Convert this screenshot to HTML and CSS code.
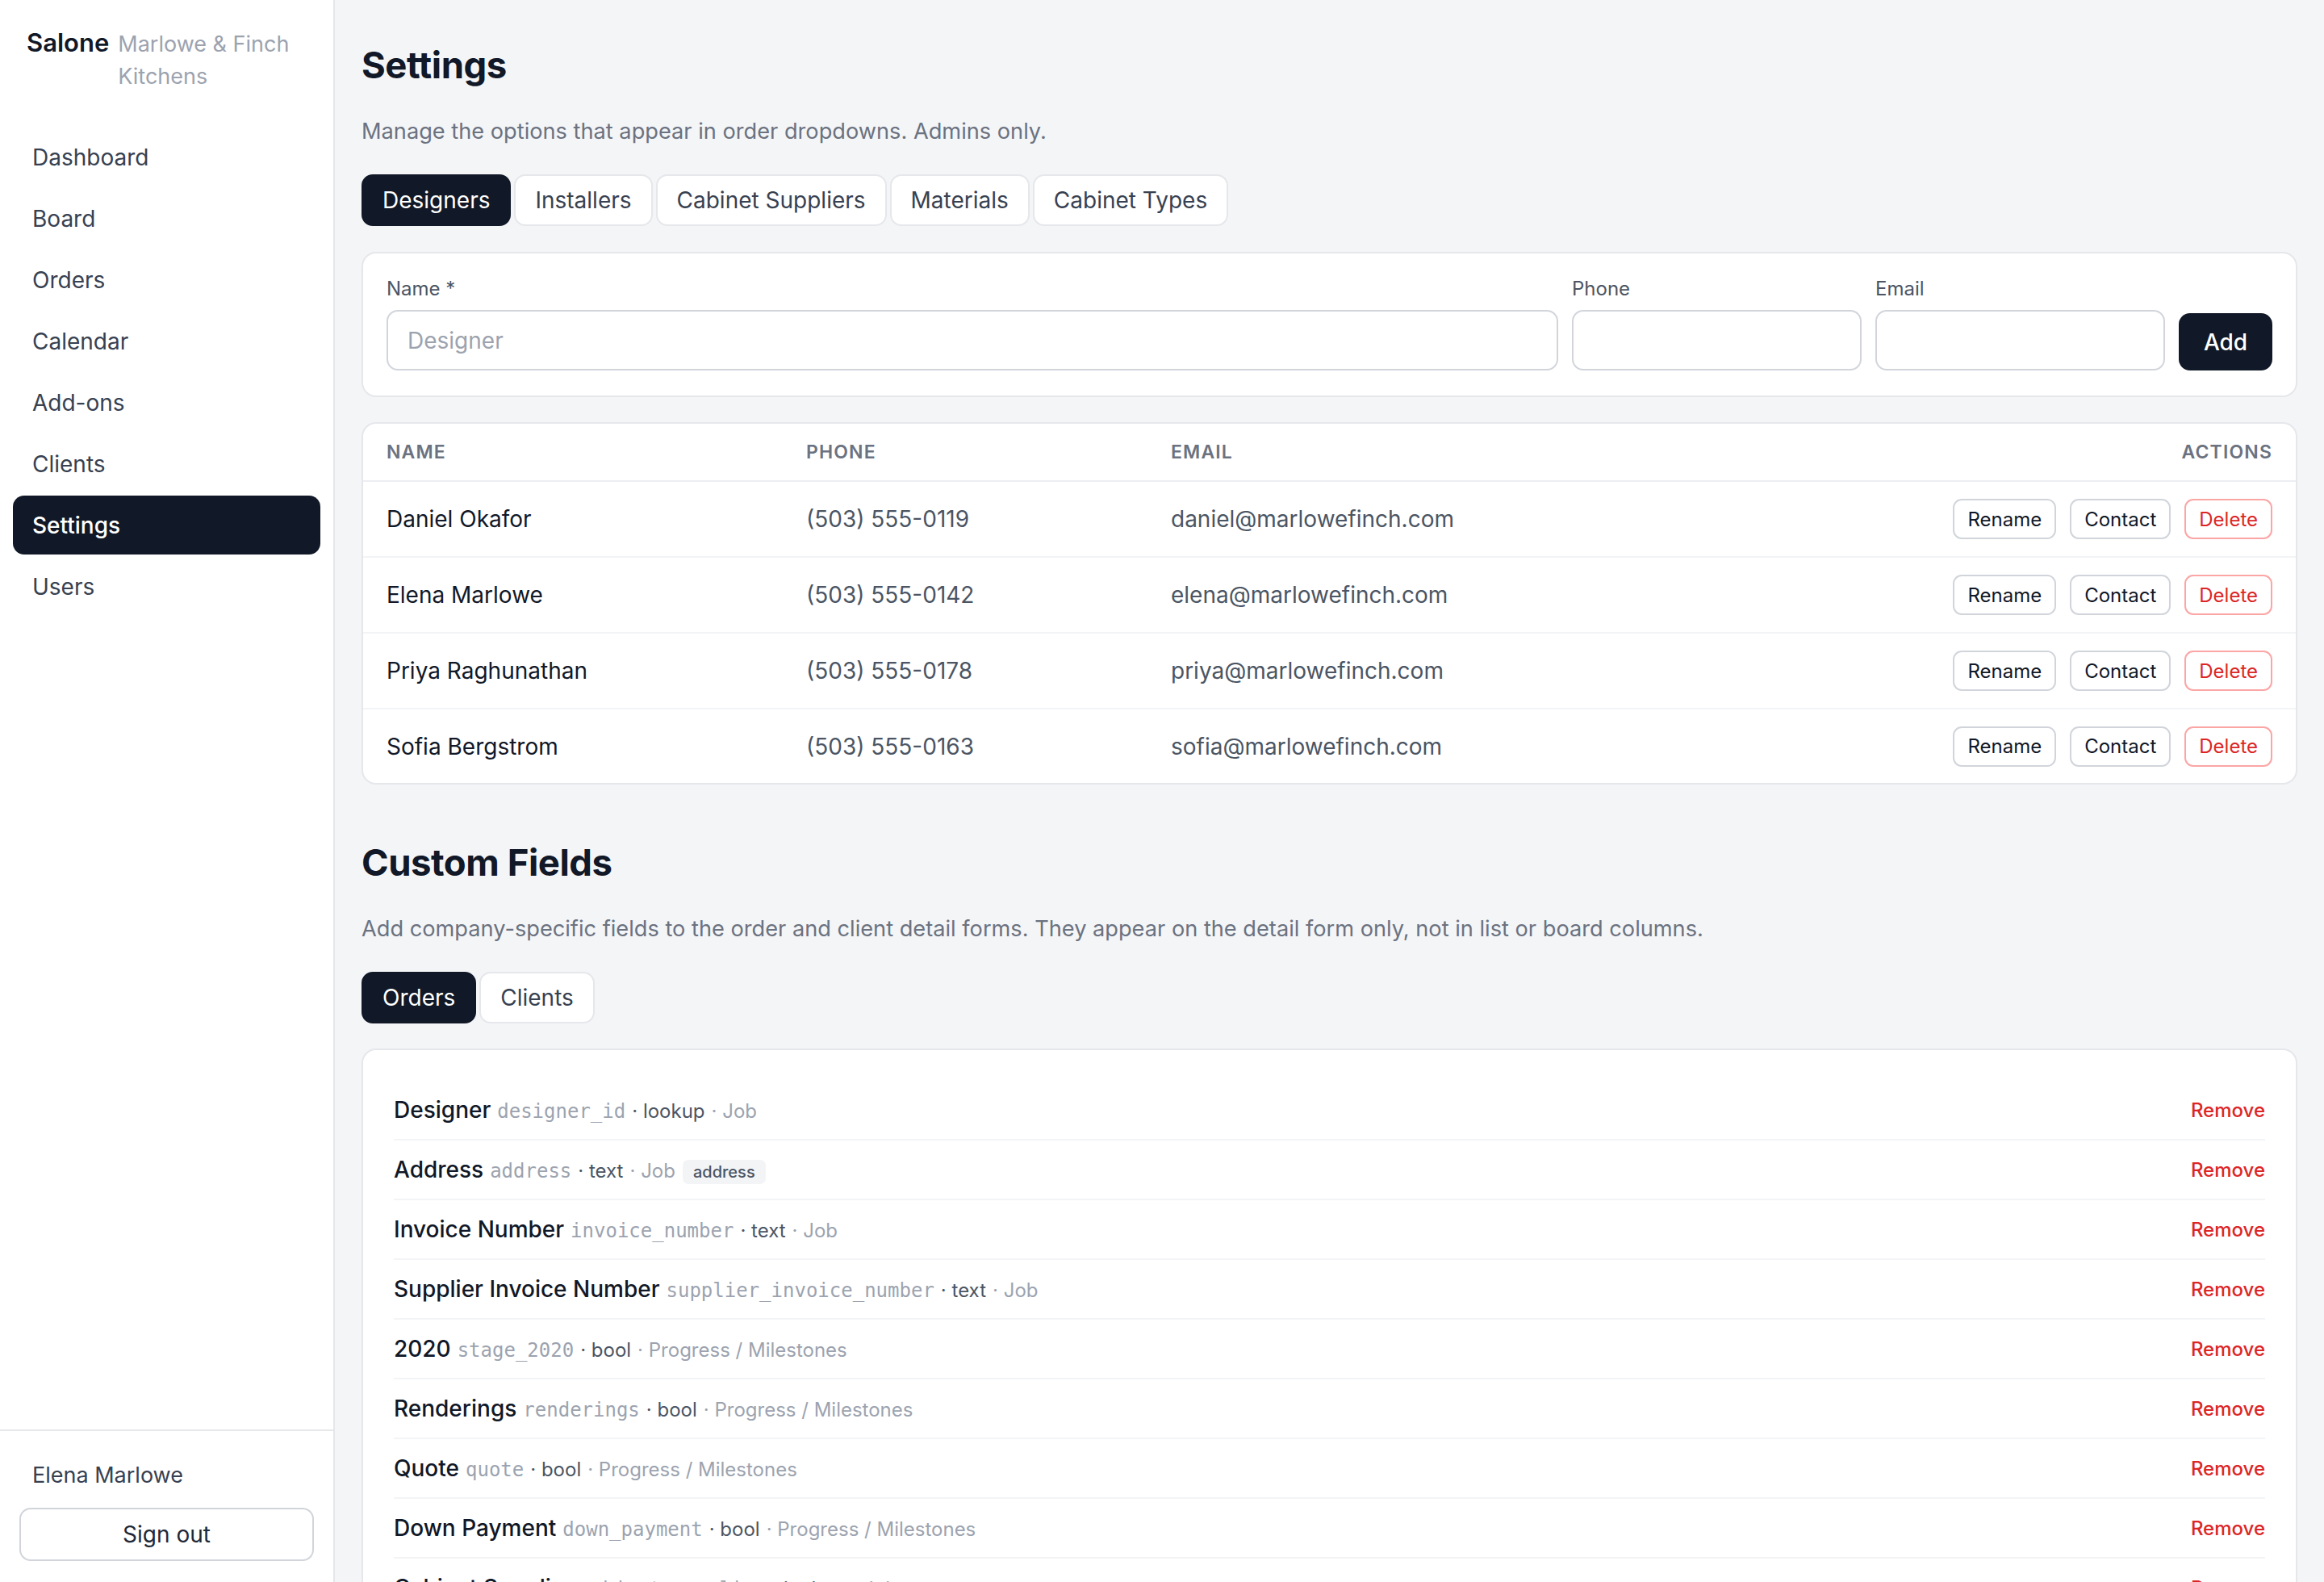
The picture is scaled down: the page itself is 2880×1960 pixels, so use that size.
FILE: index.html
```html
<!DOCTYPE html>
<html lang="en">
<head>
    <meta charset="UTF-8">
    <meta name="viewport" content="width=device-width, initial-scale=1.0">
    <title>Salone - Settings</title>
    <link rel="stylesheet" href="styles.css">
</head>
<body>
    <aside class="sidebar">
        <div class="brand">
            <span class="brand-name">Salone</span>
            <span class="brand-company">Marlowe &amp; Finch Kitchens</span>
        </div>

        <nav class="nav">
            <a href="#">Dashboard</a>
            <a href="#">Board</a>
            <a href="#">Orders</a>
            <a href="#">Calendar</a>
            <a href="#">Add-ons</a>
            <a href="#">Clients</a>
            <a href="#" class="active">Settings</a>
            <a href="#">Users</a>
        </nav>

        <div class="sidebar-footer">
            <div class="user-name">Elena Marlowe</div>
            <button class="sign-out">Sign out</button>
        </div>
    </aside>

    <main class="main">
        <h1>Settings</h1>
        <p class="desc">Manage the options that appear in order dropdowns. Admins only.</p>

        <div class="tabs">
            <button class="tab active">Designers</button>
            <button class="tab">Installers</button>
            <button class="tab">Cabinet Suppliers</button>
            <button class="tab">Materials</button>
            <button class="tab">Cabinet Types</button>
        </div>

        <form class="card add-form">
            <div class="field grow">
                <label>Name *</label>
                <input type="text" placeholder="Designer">
            </div>
            <div class="field small">
                <label>Phone</label>
                <input type="text">
            </div>
            <div class="field small">
                <label>Email</label>
                <input type="text">
            </div>
            <button type="button" class="btn-dark">Add</button>
        </form>

        <div class="card list">
            <div class="row head">
                <div>Name</div>
                <div>Phone</div>
                <div>Email</div>
                <div class="right">Actions</div>
            </div>
            <div class="row">
                <div class="name">Daniel Okafor</div>
                <div>(503) 555-0119</div>
                <div>daniel@marlowefinch.com</div>
                <div class="actions"><button>Rename</button><button>Contact</button><button class="danger">Delete</button></div>
            </div>
            <div class="row">
                <div class="name">Elena Marlowe</div>
                <div>(503) 555-0142</div>
                <div>elena@marlowefinch.com</div>
                <div class="actions"><button>Rename</button><button>Contact</button><button class="danger">Delete</button></div>
            </div>
            <div class="row">
                <div class="name">Priya Raghunathan</div>
                <div>(503) 555-0178</div>
                <div>priya@marlowefinch.com</div>
                <div class="actions"><button>Rename</button><button>Contact</button><button class="danger">Delete</button></div>
            </div>
            <div class="row">
                <div class="name">Sofia Bergstrom</div>
                <div>(503) 555-0163</div>
                <div>sofia@marlowefinch.com</div>
                <div class="actions"><button>Rename</button><button>Contact</button><button class="danger">Delete</button></div>
            </div>
        </div>

        <h2>Custom Fields</h2>
        <p class="desc">Add company-specific fields to the order and client detail forms. They appear on the detail form only, not in list or board columns.</p>

        <div class="tabs">
            <button class="tab active">Orders</button>
            <button class="tab">Clients</button>
        </div>

        <div class="card fields">
            <div class="field-row">
                <div><span class="f-label">Designer</span><span class="f-key">designer_id</span><span class="f-type">· lookup</span><span class="f-group">· Job</span></div>
                <a href="#" class="remove">Remove</a>
            </div>
            <div class="field-row">
                <div><span class="f-label">Address</span><span class="f-key">address</span><span class="f-type">· text</span><span class="f-group">· Job</span><span class="badge">address</span></div>
                <a href="#" class="remove">Remove</a>
            </div>
            <div class="field-row">
                <div><span class="f-label">Invoice Number</span><span class="f-key">invoice_number</span><span class="f-type">· text</span><span class="f-group">· Job</span></div>
                <a href="#" class="remove">Remove</a>
            </div>
            <div class="field-row">
                <div><span class="f-label">Supplier Invoice Number</span><span class="f-key">supplier_invoice_number</span><span class="f-type">· text</span><span class="f-group">· Job</span></div>
                <a href="#" class="remove">Remove</a>
            </div>
            <div class="field-row">
                <div><span class="f-label">2020</span><span class="f-key">stage_2020</span><span class="f-type">· bool</span><span class="f-group">· Progress / Milestones</span></div>
                <a href="#" class="remove">Remove</a>
            </div>
            <div class="field-row">
                <div><span class="f-label">Renderings</span><span class="f-key">renderings</span><span class="f-type">· bool</span><span class="f-group">· Progress / Milestones</span></div>
                <a href="#" class="remove">Remove</a>
            </div>
            <div class="field-row">
                <div><span class="f-label">Quote</span><span class="f-key">quote</span><span class="f-type">· bool</span><span class="f-group">· Progress / Milestones</span></div>
                <a href="#" class="remove">Remove</a>
            </div>
            <div class="field-row">
                <div><span class="f-label">Down Payment</span><span class="f-key">down_payment</span><span class="f-type">· bool</span><span class="f-group">· Progress / Milestones</span></div>
                <a href="#" class="remove">Remove</a>
            </div>
            <div class="field-row">
                <div><span class="f-label">Cabinet Supplier</span><span class="f-key">cabinet_supplier</span><span class="f-type">· lookup</span><span class="f-group">· Job</span></div>
                <a href="#" class="remove">Remove</a>
            </div>
        </div>
    </main>
</body>
</html>
```

FILE: styles.css
```css
* {
    box-sizing: border-box;
}
body {
    margin: 0;
    height: 1960px;
    display: flex;
    overflow: hidden;
    font-family: Inter, "Noto Sans", sans-serif;
    color: #111827;
    background-color: #f4f5f7;
}

/* sidebar */
.sidebar {
    width: 415px;
    flex-shrink: 0;
    display: flex;
    flex-direction: column;
    background-color: #ffffff;
    border-right: 2px solid #e5e7eb;
}
.brand {
    display: flex;
    align-items: baseline;
    gap: 11px;
    padding: 33px 30px 0 33px;
}
.brand-name {
    font-size: 31px;
    font-weight: 600;
    line-height: 40px;
    color: #111827;
}
.brand-company {
    font-size: 27px;
    line-height: 40px;
    color: #9ca3af;
}
.nav {
    display: flex;
    flex-direction: column;
    gap: 3px;
    margin-top: 43px;
    padding: 0 16px;
}
.nav a {
    height: 73px;
    display: flex;
    align-items: center;
    padding: 0 24px;
    border-radius: 14px;
    font-size: 28px;
    color: #374151;
    text-decoration: none;
}
.nav a.active {
    background-color: #111827;
    color: #ffffff;
    font-weight: 500;
}
.sidebar-footer {
    margin-top: auto;
    border-top: 2px solid #e5e7eb;
    padding: 35px 24px 26px;
}
.user-name {
    padding-left: 16px;
    font-size: 27px;
    line-height: 40px;
    color: #374151;
}
.sign-out {
    margin-top: 20px;
    width: 100%;
    height: 66px;
    background-color: #ffffff;
    border: 2px solid #d1d5db;
    border-radius: 14px;
    font-family: inherit;
    font-size: 28px;
    color: #1f2937;
}

/* main */
.main {
    flex: 1;
    min-width: 0;
    padding: 51px 33px 0 33px;
    overflow: hidden;
}
h1, h2 {
    margin: 0;
    font-size: 45.5px;
    font-weight: 700;
    line-height: 60px;
    letter-spacing: -0.01em;
    color: #111827;
}
h2 {
    margin-top: 67px;
}
.desc {
    margin: 32px 0 0;
    font-size: 27.2px;
    line-height: 40px;
    color: #6b7280;
}
.tabs {
    display: flex;
    gap: 4px;
    margin-top: 33px;
}
.tab {
    height: 64px;
    padding: 0 24px;
    background-color: #ffffff;
    border: 2px solid #e5e7eb;
    border-radius: 14px;
    font-family: inherit;
    font-size: 28px;
    color: #374151;
}
.tab.active {
    background-color: #111827;
    border-color: #111827;
    color: #ffffff;
}
.card {
    background-color: #ffffff;
    border: 2px solid #e5e7eb;
    border-radius: 18px;
}

/* add form */
.add-form {
    display: flex;
    align-items: flex-end;
    gap: 17px;
    margin-top: 32px;
    padding: 27px 29px 31px;
}
.field {
    display: flex;
    flex-direction: column;
    gap: 9px;
}
.field.grow {
    flex: 1;
}
.field.small {
    width: 359px;
}
.field label {
    font-size: 24px;
    line-height: 34px;
    color: #4b5563;
}
.field input {
    height: 75px;
    padding: 0 24px;
    border: 2px solid #d1d5db;
    border-radius: 14px;
    font-family: inherit;
    font-size: 28px;
    color: #111827;
}
.field input::placeholder {
    color: #9ca3af;
}
.btn-dark {
    width: 116px;
    height: 71px;
    background-color: #111827;
    border: none;
    border-radius: 14px;
    font-family: inherit;
    font-size: 28px;
    font-weight: 500;
    color: #ffffff;
}

/* designers list */
.list {
    margin-top: 31px;
    overflow: hidden;
}
.row {
    display: grid;
    grid-template-columns: 520px 452px 1fr auto;
    align-items: center;
    height: 94px;
    border-bottom: 2px solid #f3f4f6;
    font-size: 28px;
    color: #4b5563;
}
.row:last-child {
    border-bottom: none;
    height: 91px;
}
.row > div {
    padding-left: 29px;
}
.row > div:last-child {
    padding-right: 29px;
}
.row.head {
    height: 72px;
    border-bottom-color: #eceef1;
    font-size: 23px;
    font-weight: 600;
    letter-spacing: 0.05em;
    text-transform: uppercase;
    color: #6b7280;
}
.right {
    text-align: right;
}
.row .name {
    color: #111827;
}
.actions {
    display: flex;
    gap: 17px;
}
.actions button {
    height: 50px;
    padding: 0 16px;
    background-color: #ffffff;
    border: 2px solid #d1d5db;
    border-radius: 11px;
    font-family: inherit;
    font-size: 24px;
    color: #111827;
}
.actions button.danger {
    border-color: #fca5a5;
    color: #dc2626;
}

/* custom fields */
.fields {
    margin-top: 31px;
    padding: 38px 38px 0;
}
.field-row {
    display: flex;
    align-items: center;
    justify-content: space-between;
    height: 74px;
    border-bottom: 2px solid #f3f4f6;
}
.field-row span + span {
    margin-left: 8px;
}
.f-label {
    font-size: 28px;
    font-weight: 500;
    color: #111827;
}
.f-key {
    font-family: "DejaVu Sans Mono", "Liberation Mono", monospace;
    font-size: 24px;
    color: #9ca3af;
}
.f-type {
    font-size: 24px;
    color: #4b5563;
}
.f-group {
    font-size: 24px;
    color: #9ca3af;
}
.field-row .badge {
    margin-left: 9px;
    padding: 3px 13px;
    background-color: #f3f4f6;
    border-radius: 7px;
    font-size: 20px;
    font-weight: 500;
    color: #4b5563;
}
.remove {
    font-size: 24px;
    font-weight: 500;
    color: #dc2626;
    text-decoration: none;
}
```
